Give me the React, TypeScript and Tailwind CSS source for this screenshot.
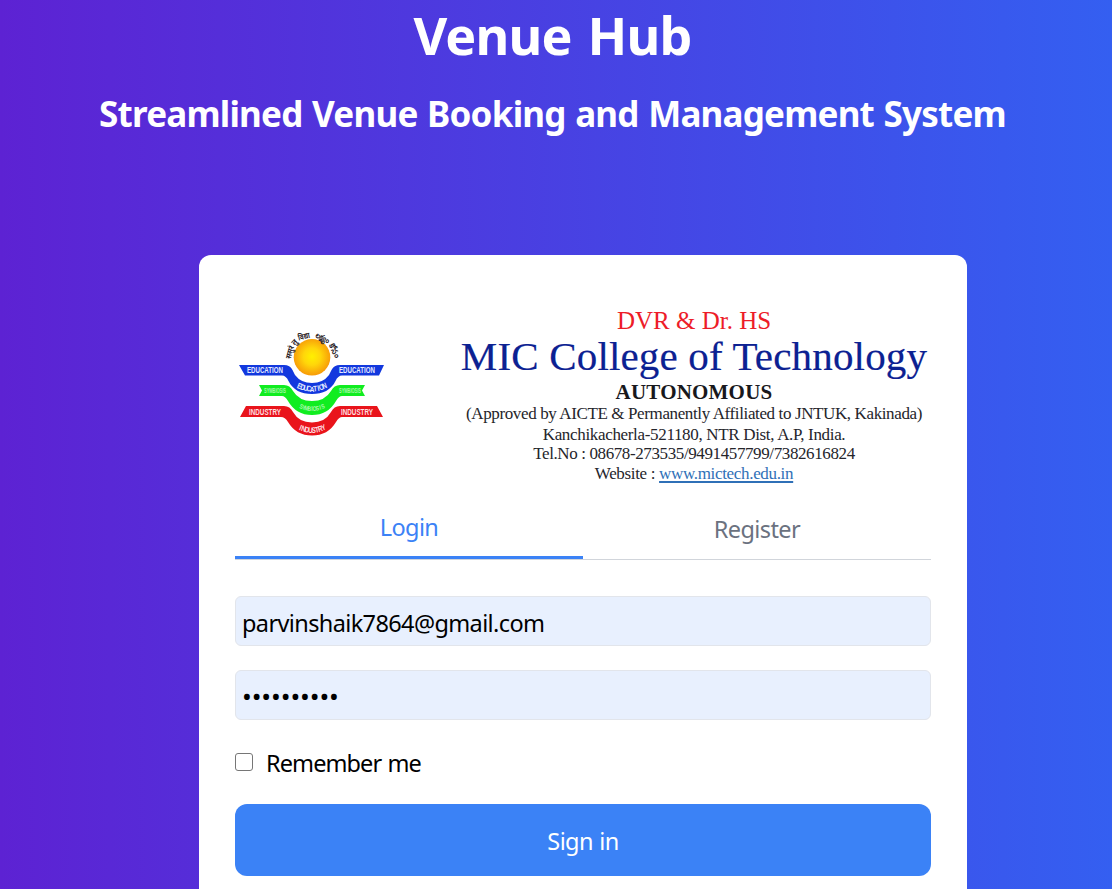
import React from "react";

type CurvedLabelProps = {
  label: string;
  width: number;
  centerY: number;
  sag: number;
  tilt: number;
  size: number;
};

/* Sets a word along the shallow dip in the middle of a ribbon, letter by letter. */
function CurvedLabel({ label, width, centerY, sag, tilt, size }: CurvedLabelProps) {
  const last = label.length - 1;
  return (
    <>
      {label.split("").map((letter, i) => {
        const t = (i / last) * 2 - 1;
        const x = 312 + (t * width) / 2;
        const y = centerY - sag * t * t;
        return (
          <text key={i} fontSize={size} textAnchor="middle" transform={`translate(${x} ${y}) rotate(${-t * tilt}) scale(0.8 1)`}>
            {letter}
          </text>
        );
      })}
    </>
  );
}

function CollegeLogo() {
  return (
    <svg width="150" height="110" viewBox="237 330 150 110" className="shrink-0 overflow-visible" aria-label="College emblem">
      <defs>
        <radialGradient id="sun" cx="50%" cy="48%" r="52%">
          <stop offset="0" stopColor="#fff000" />
          <stop offset="0.45" stopColor="#ffd60a" />
          <stop offset="1" stopColor="#f79a08" />
        </radialGradient>
      </defs>
      <path d="M239 365H284Q290 365 292.500 370L295 375Q301 383 312 383T329 375L331.500 370Q334 365 340 365H384L379 375.500H342Q338 375.500 335.500 381C331 390 323 394 312 394S293 390 288.500 381Q286 375.500 282 375.500H245Z" fill="#1238de" />
      <path d="M259 385H284Q290 385 293 391Q299 401 312 401T331 391Q334 385 340 385H365L362 390.500L365 396H342Q339 396 336 401Q328 415 312 415T288 401Q285 396 282 396H259L262 390.500Z" fill="#10ed20" />
      <path d="M246 406H284Q290 406 293 412Q299 422.500 312 422.500T331 412Q334 406 340 406H377L383 417H342Q339 417 336 422Q328 435.500 312 435.500T288 422Q285 417 281 417H240Z" fill="#e9141b" />
      <circle cx="312" cy="357.300" r="18.300" fill="url(#sun)" />
      <g fill="#29211e" fontFamily="Noto Sans, sans-serif" fontWeight="700" fontSize="8" textAnchor="middle">
        <text transform="translate(292.500 353) rotate(-75)" textLength="13" lengthAdjust="spacingAndGlyphs">ससुरं</text>
        <text transform="translate(296.500 344) rotate(-48)" textLength="5" lengthAdjust="spacingAndGlyphs">तु</text>
        <text transform="translate(304.500 339) rotate(-14)" textLength="12" lengthAdjust="spacingAndGlyphs">विद्या</text>
        <text transform="translate(321.500 340) rotate(25)" textLength="15" lengthAdjust="spacingAndGlyphs">లక్ష్యం</text>
        <text transform="translate(332 352) rotate(65)" textLength="15" lengthAdjust="spacingAndGlyphs">కోసం</text>
      </g>
      <g fill="#e4eaff" fontFamily="Liberation Sans, sans-serif" fontWeight="700">
        <text x="247" y="373.300" fontSize="8.500" textLength="36" lengthAdjust="spacingAndGlyphs">EDUCATION</text>
        <text x="339" y="373.300" fontSize="8.500" textLength="36" lengthAdjust="spacingAndGlyphs">EDUCATION</text>
        <CurvedLabel label="EDUCATION" width={27} centerY={391.5} sag={3} tilt={22} size={8} />
      </g>
      <g fill="#ffdfe0" fontFamily="Liberation Sans, sans-serif" fontWeight="700">
        <text x="249" y="414.500" fontSize="8.500" textLength="32" lengthAdjust="spacingAndGlyphs">INDUSTRY</text>
        <text x="341" y="414.500" fontSize="8.500" textLength="32" lengthAdjust="spacingAndGlyphs">INDUSTRY</text>
        <CurvedLabel label="INDUSTRY" width={25} centerY={433} sag={3} tilt={22} size={8} />
      </g>
      <g fill="#a5f8a7" fontFamily="Liberation Sans, sans-serif" fontWeight="700">
        <text x="264" y="393" fontSize="6.500" textLength="22" lengthAdjust="spacingAndGlyphs">SYMBIOSIS</text>
        <text x="339" y="393" fontSize="6.500" textLength="22" lengthAdjust="spacingAndGlyphs">SYMBIOSIS</text>
        <CurvedLabel label="SYMBIOSIS" width={23} centerY={411} sag={2.5} tilt={20} size={6.5} />
      </g>
    </svg>
  );
}

function CollegeBanner() {
  return (
    <div className="flex h-[204px] items-start">
      <div className="ml-[2px] pt-[39px]">
        <CollegeLogo />
      </div>
      <div className="ml-[67px] flex w-[480px] shrink-0 flex-col items-center whitespace-nowrap pt-[15px] font-['Liberation_Serif',serif] text-[#25252b]">
        <p className="h-[29px] text-[25px] leading-[30px] text-[#ed1c28]">DVR &amp; Dr. HS</p>
        <p className="h-[45px] text-[41px] leading-[43px] tracking-[0.170px] text-[#0c2192] [-webkit-text-stroke:0.200px_#0c2192]">MIC College of Technology</p>
        <p className="h-[22px] text-[21px] font-bold leading-[25px] tracking-[0.200px] text-[#18181c]">AUTONOMOUS</p>
        <p className="h-[21px] text-[17px] leading-[24px] tracking-[-0.380px]">(Approved by AICTE &amp; Permanently Affiliated to JNTUK, Kakinada)</p>
        <p className="h-[20px] text-[17px] leading-[24px] tracking-[-0.330px]">Kanchikacherla-521180, NTR Dist, A.P, India.</p>
        <p className="h-[19px] text-[17px] leading-[22px] tracking-[-0.390px]">Tel.No : 08678-273535/9491457799/7382616824</p>
        <p className="h-[20px] text-[17px] leading-[23px] tracking-[-0.330px]">
          Website : <a className="text-[#2f70b7] underline decoration-2 underline-offset-2">www.mictech.edu.in</a>
        </p>
      </div>
    </div>
  );
}

export default function App() {
  return (
    <div className="h-[889px] overflow-hidden bg-linear-to-r/srgb from-[#5d22d3] to-[#345ff1] font-['Noto_Sans',sans-serif]">
      <header className="flex h-[255px] w-[1105px] flex-col items-center whitespace-nowrap text-white">
        <h1 className="h-[76px] text-[52px] font-bold leading-[70px] tracking-[-0.800px] [word-spacing:3px]">Venue Hub</h1>
        <h2 className="text-[35px] font-bold leading-[75px] tracking-[-0.780px] [word-spacing:1.200px]">Streamlined Venue Booking and Management System</h2>
      </header>
      <main className="ml-[199px] h-[700px] w-[768px] rounded-[12px] bg-white px-9 pt-9">
        <CollegeBanner />
        <div className="mt-px flex h-[64px] border-b border-[#d1d5db] text-[23.500px] tracking-[-0.600px]">
          <button className="h-[63px] w-1/2 border-b-[3px] border-[#3b82f6] pt-[4px] text-[#3b82f6]">Login</button>
          <button className="h-[63px] w-1/2 pt-[5px] text-[#6b7280]">Register</button>
        </div>
        <form className="mt-9 text-[23.500px] tracking-[-0.620px] text-black">
          <input type="text" readOnly value="parvinshaik7864@gmail.com" className="block h-[50px] w-full rounded-[6px] border border-[#e2e5eb] bg-[#e8f0fe] px-[6px] pt-[3px] outline-none" />
          <input type="password" readOnly value="venuehub10" className="mt-6 block h-[50px] w-full rounded-[6px] border border-[#e2e5eb] bg-[#e8f0fe] px-[6px] pt-px text-[26px] tracking-[-0.100px] outline-none" />
          <label className="mt-6 flex h-[39px] items-center">
            <input type="checkbox" className="mb-1 size-[18px] appearance-none rounded-[3px] border-[1.500px] border-[#767676] bg-white" />
            <span className="ml-[13px] pt-px tracking-[-0.900px] [word-spacing:1px]">Remember me</span>
          </label>
          <button type="button" className="mt-[21px] h-[72px] w-full rounded-[12px] bg-[#3b82f6] pt-[4px] text-white [word-spacing:1px]">Sign in</button>
        </form>
      </main>
    </div>
  );
}
